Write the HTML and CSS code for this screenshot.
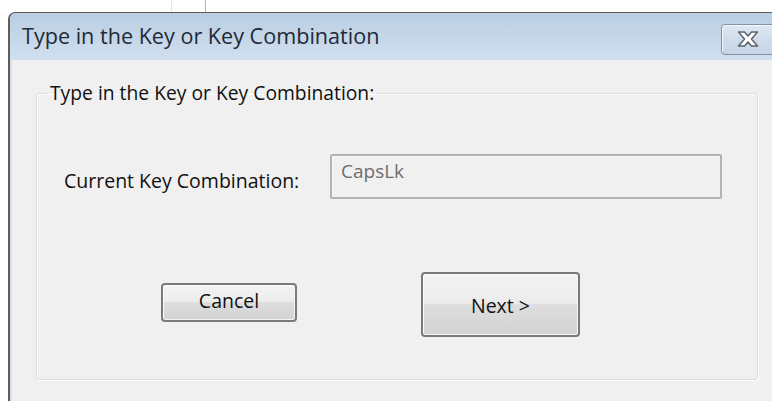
FILE: index.html
```html
<!DOCTYPE html>
<html lang="en">
<head>
<meta charset="utf-8">
<title>Type in the Key or Key Combination</title>
<link rel="stylesheet" href="styles.css">
</head>
<body>
  <div class="desktop">
    <span class="desk-line desk-line-a"></span>
    <span class="desk-line desk-line-b"></span>
  </div>
  <div class="window">
    <div class="titlebar">
      <span class="title">Type in the Key or Key Combination</span>
      <button class="close" aria-label="Close">
        <svg width="24" height="18" viewBox="0 0 24 18">
          <path d="M2.5 2 L8.5 2 L12 6 L15.5 2 L21.5 2 L15.5 9 L21.5 16 L15.5 16 L12 12 L8.5 16 L2.5 16 L8.5 9 Z" fill="#ffffff" stroke="#5a636d" stroke-width="1.5" stroke-linejoin="round"/>
        </svg>
      </button>
    </div>
    <div class="client">
      <fieldset class="group">
        <legend class="group-title">Type in the Key or Key Combination:</legend>
        <div class="field-row">
          <label class="field-label" for="combo">Current Key Combination:</label>
          <input class="field-input" id="combo" type="text" value="CapsLk" disabled>
        </div>
        <div class="button-row">
          <button class="btn btn-cancel">Cancel</button>
          <button class="btn btn-next">Next &gt;</button>
        </div>
      </fieldset>
    </div>
  </div>
</body>
</html>
```
FILE: styles.css
```css
html, body {
  margin: 0;
  padding: 0;
  height: 100%;
  overflow: hidden;
  background: #ffffff;
  font-family: "Open Sans", "Noto Sans", sans-serif;
}

.desktop {
  height: 12px;
  display: flex;
  padding-left: 171px;
  gap: 33px;
}

.desk-line {
  width: 1px;
  height: 12px;
}

.desk-line-a { background: #e6e6e6; }
.desk-line-b { background: #b4b4b4; }

.window {
  margin-left: 8px;
  height: 389px;
  display: flex;
  flex-direction: column;
  border-top: 1px solid #5a5a5a;
  border-left: 2px solid #5e5e5e;
  border-top-left-radius: 7px;
  background: #c3d4e5;
}

.titlebar {
  height: 47px;
  display: flex;
  align-items: center;
  justify-content: space-between;
  padding-left: 12px;
  background: linear-gradient(to bottom, #bacde1 0%, #c6d7e9 55%, #d1e0ef 100%);
  border-top-left-radius: 6px;
}

.title {
  font-size: 21.6px;
  color: #1e2a39;
  margin-top: -3px;
}

.close {
  width: 60px;
  height: 31px;
  margin-right: -9px;
  margin-top: 5px;
  display: flex;
  align-items: center;
  justify-content: flex-start;
  padding: 0 0 0 14px;
  border: 1px solid #7e91a8;
  border-radius: 4px;
  background: linear-gradient(to bottom, #dfe8f2 0%, #cfdceb 50%, #c6d5e6 100%);
  box-shadow: inset 1px 1px 0 rgba(255,255,255,0.7);
}

.client {
  flex: 1;
  background: #f0f0f0;
  border-left: 2px solid #d5e1ee;
  padding: 0 12px 0 24px;
}

.group {
  width: 722px;
  height: 297px;
  box-sizing: border-box;
  margin: 23px 0 0 0;
  padding: 0;
  border: 1px solid #d5dfe5;
  border-radius: 3px;
  box-shadow: inset 1px 1px 0 #ffffff, 1px 1px 0 #ffffff;
  display: flex;
  flex-direction: column;
}

.group-title {
  margin-left: 11px;
  padding: 0 2px;
  font-size: 19.3px;
  line-height: 20px;
  color: #111111;
}

.field-row {
  display: flex;
  align-items: center;
  margin-top: 51px;
  padding-left: 27px;
}

.field-label {
  width: 266px;
  font-size: 19.5px;
  color: #111111;
  margin-top: 8px;
}

.field-input {
  width: 392px;
  height: 45px;
  box-sizing: border-box;
  margin: 0;
  padding: 0 0 12px 9px;
  border: 2px solid #b3b3b3;
  border-radius: 2px;
  background: #f0f0f0;
  box-shadow: inset 1px 1px 0 #fafafa;
  font-family: "Open Sans", "Noto Sans", sans-serif;
  font-size: 19px;
  color: #6d6d6d;
  -webkit-text-fill-color: #6d6d6d;
  opacity: 1;
}

.button-row {
  display: flex;
  align-items: flex-start;
  margin-top: 73px;
  padding-left: 124px;
  gap: 124px;
}

.btn {
  box-sizing: border-box;
  margin: 0;
  padding: 0;
  border: 2px solid #7a7a7a;
  border-radius: 4px;
  background: linear-gradient(to bottom, #f3f3f3 0%, #ececec 48%, #dedede 50%, #d2d2d2 100%);
  box-shadow: inset 1px 1px 0 #fbfbfb, inset -1px -1px 0 #f4f4f4;
  font-family: "Open Sans", "Noto Sans", sans-serif;
  font-size: 19.5px;
  color: #111111;
}

.btn-cancel {
  width: 136px;
  height: 39px;
  margin-top: 11px;
  padding-bottom: 4px;
}

.btn-next {
  width: 159px;
  height: 65px;
  padding-top: 2px;
}
```
